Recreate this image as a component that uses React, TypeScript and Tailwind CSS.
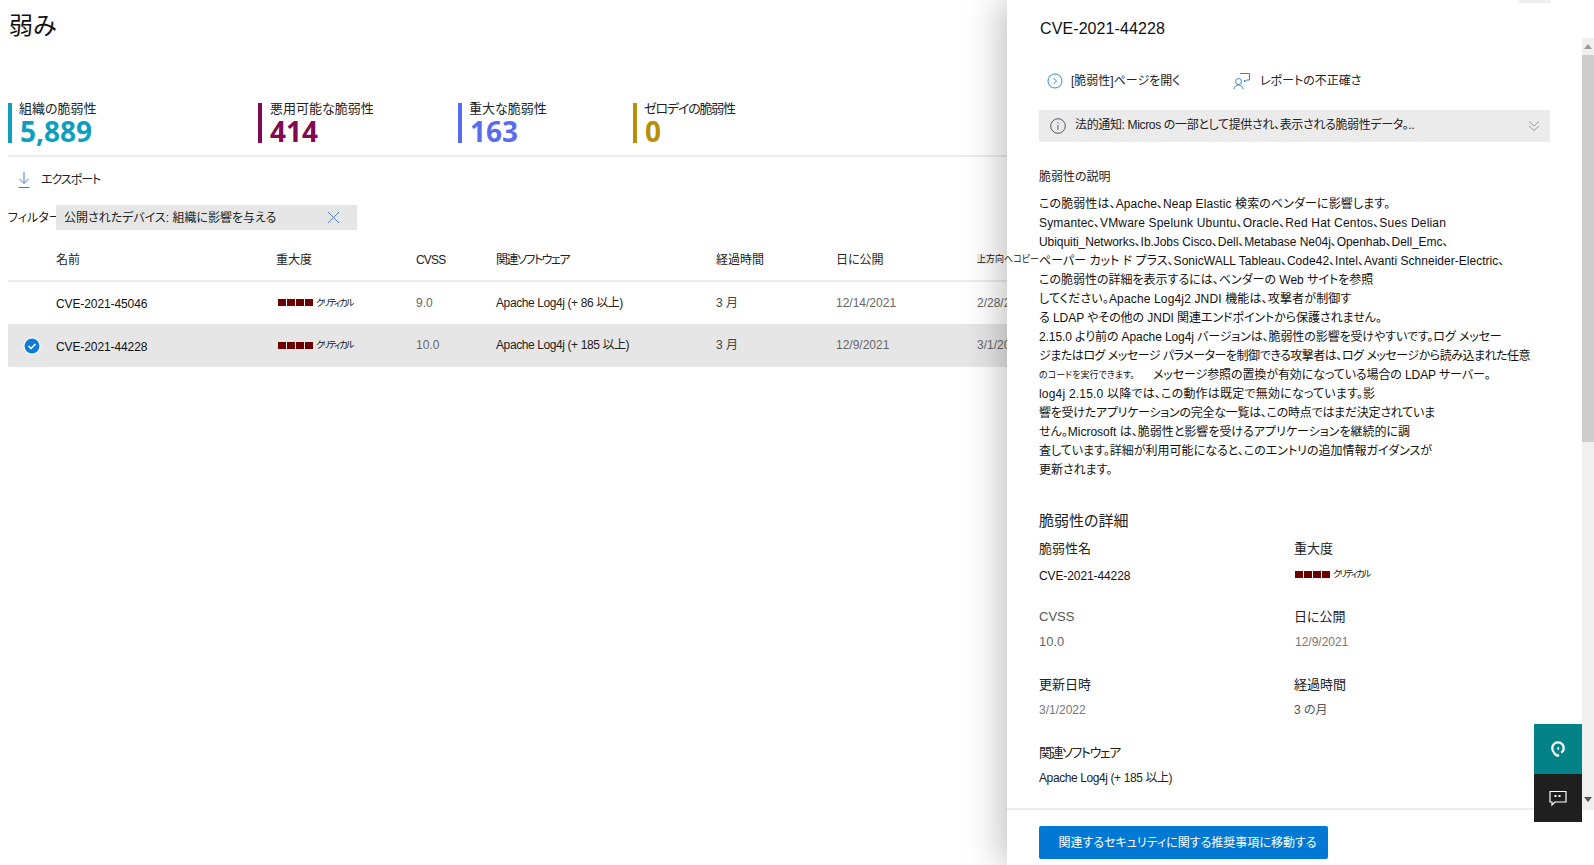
const font = "font-['Liberation_Sans','Noto_Sans_CJK_JP',sans-serif] [font-feature-settings:'palt']";

function Severity({ className }: { className?: string }) {
  return (
    <div className={`flex items-center ${className ?? ""}`}>
      <div className="flex gap-[1px]">
        {[0, 1, 2, 3].map((i) => (
          <span key={i} className="block h-[7px] w-[8px] bg-[#6b0000]" />
        ))}
      </div>
      <span className="ml-[3px] text-[9px] leading-[12px] tracking-[-1.7px] text-[#111]">クリティカル</span>
    </div>
  );
}

const stats = [
  { label: "組織の脆弱性", value: "5,889", w: "w-[250px]", bar: "bg-[#0f9fbd]", text: "text-[#0f9fbd]", track: "-ml-[1px]" },
  { label: "悪用可能な脆弱性", value: "414", w: "w-[200px]", bar: "bg-[#7f0a50]", text: "text-[#7f0a50]", track: "" },
  { label: "重大な脆弱性", value: "163", w: "w-[175px]", bar: "bg-[#5a6cee]", text: "text-[#5a6cee]", track: "-ml-[1px]" },
  { label: "ゼロデイの脆弱性", value: "0", w: "w-[200px]", bar: "bg-[#b88f0a]", text: "text-[#b88f0a]", track: "-ml-[1px] tracking-[-1.2px]" },
];

const cols = "grid grid-cols-[48px_220px_140px_81px_219px_121px_140px_1fr] items-center";

const rows = [
  { id: "CVE-2021-45046", cvss: "9.0", sw: "Apache Log4j (+ 86 以上)", pub: "12/14/2021", upd: "2/28/2022", sel: false, h: "h-[42px]" },
  { id: "CVE-2021-44228", cvss: "10.0", sw: "Apache Log4j (+ 185 以上)", pub: "12/9/2021", upd: "3/1/2022", sel: true, h: "h-[43px]" },
];

const desc = [
  { t: "この脆弱性は、Apache、Neap Elastic 検索のベンダーに影響します。", c: "tracking-[0.1px]" },
  { t: "Symantec、VMware Spelunk Ubuntu、Oracle、Red Hat Centos、Sues Delian", c: "tracking-[0.18px]" },
  { t: "Ubiquiti_Networks、Ib.Jobs Cisco、Dell、Metabase Ne04j、Openhab、Dell_Emc、", c: "tracking-[-0.06px]" },
  { t: "ペーパー カット ド プラス、SonicWALL Tableau、Code42、Intel、Avanti Schneider-Electric、", c: "tracking-[0.02px]" },
  { t: "この脆弱性の詳細を表示するには、ベンダーの Web サイトを参照", c: "" },
  { t: "してください。Apache Log4j2 JNDI 機能は、攻撃者が制御す", c: "tracking-[0.15px]" },
  { t: "る LDAP やその他の JNDI 関連エンドポイントから保護されません。", c: "tracking-[-0.06px]" },
  { t: "2.15.0 より前の Apache Log4j バージョンは、脆弱性の影響を受けやすいです。ログ メッセー", c: "tracking-[-0.1px]" },
  { t: "ジまたはログ メッセージ パラメーターを制御できる攻撃者は、ログ メッセージから読み込まれた任意", c: "tracking-[-0.48px]" },
];

const desc2 = [
  { t: "log4j 2.15.0 以降では、この動作は既定で無効になっています。影", c: "tracking-[0.2px]" },
  { t: "響を受けたアプリケーションの完全な一覧は、この時点ではまだ決定されていま", c: "tracking-[-0.26px]" },
  { t: "せん。Microsoft は、脆弱性と影響を受けるアプリケーションを継続的に調", c: "" },
  { t: "査しています。詳細が利用可能になると、このエントリの追加情報ガイダンスが", c: "" },
  { t: "更新されます。", c: "" },
];

function Detail({ label, children, labelClass, valueClass }: { label: string; children: React.ReactNode; labelClass?: string; valueClass?: string }) {
  return (
    <div>
      <div className={`h-[20px] text-[13px] leading-[20px] ${labelClass ?? "text-[#222]"}`}>{label}</div>
      <div className={`mt-[5px] flex h-[20px] items-center text-[12px] leading-[20px] ${valueClass ?? ""}`}>{children}</div>
    </div>
  );
}

export default function App() {
  return (
    <div className={`relative h-[865px] w-[1594px] overflow-hidden bg-white text-[#111] ${font}`}>
      {/* main page */}
      <div className="pl-[8px]">
        <h1 className="ml-[1px] pt-[14px] text-[24px] leading-[24px] font-normal text-[#111]">弱み</h1>
        <div className="mt-[65px] flex border-b-2 border-[#ececec] pb-[12px]">
          {stats.map((s) => (
            <div key={s.label} className={`flex h-[40px] ${s.w}`}>
              <div className={`h-[40px] w-[4px] ${s.bar}`} />
              <div className="-mt-[2px] pl-[8px]">
                <div className={`h-[16px] text-[13px] leading-[16px] whitespace-nowrap text-[#222] ${s.track}`}>{s.label}</div>
                <div className={`font-['Open_Sans',sans-serif] text-[28px] leading-[28px] font-bold ${s.text}`}>{s.value}</div>
              </div>
            </div>
          ))}
        </div>

        <div className="flex h-[44px] items-center pt-[2px] pl-[9px]">
          <svg width="14" height="18" viewBox="0 0 14 18" fill="none" stroke="#3b7fc9" strokeWidth="1">
            <path d="M7 1v11M2.5 8 7 12.5 11.5 8M1.5 16.5h11" />
          </svg>
          <span className="ml-[10px] text-[12px] tracking-[-1px] text-[#222]">エクスポート</span>
        </div>

        <div className="mt-[4px] flex h-[25px] items-center">
          <span className="w-[48px] text-[12px] whitespace-nowrap text-[#222]">フィルター:</span>
          <div className="flex h-[25px] w-[301px] items-center justify-between bg-[#e6e6e6] pr-[17px] pl-[8px]">
            <span className="text-[12px] text-[#222]">公開されたデバイス: 組織に影響を与える</span>
            <svg width="13" height="13" viewBox="0 0 13 13" fill="none" stroke="#5585c5" strokeWidth="1">
              <path d="M1 1l11 11M12 1 1 12" />
            </svg>
          </div>
        </div>

        <div className={`${cols} mt-[1px] h-[51px] border-b-2 border-[#ececec] pt-[8px] text-[12px] text-[#222]`}>
          <span />
          <span>名前</span>
          <span>重大度</span>
          <span className="tracking-[-0.8px]">CVSS</span>
          <span className="-ml-[1px] tracking-[-1.5px]">関連ソフトウェア</span>
          <span>経過時間</span>
          <span className="-ml-[1px]">日に公開</span>
          <span className="relative z-20 w-max text-[9px] leading-[13px] text-[#111]">
            <span className="bg-[linear-gradient(90deg,#e3e3e3_21px,transparent_21px)]">上方向へコピー</span>
          </span>
        </div>

        {rows.map((r) => (
          <div key={r.id} className={`${cols} ${r.h} pb-[1px] text-[12px] ${r.sel ? "bg-[#e6e6e6]" : "bg-white"}`}>
            <span className="flex justify-center pt-[1px]">
              {r.sel && (
                <svg width="18" height="18" viewBox="0 0 18 18">
                  <circle cx="9" cy="9" r="8.5" fill="#fff" />
                  <circle cx="9" cy="9" r="7.5" fill="#0f7bd8" />
                  <path d="M5.5 9.2 8 11.5l4.5-4.5" fill="none" stroke="#fff" strokeWidth="1.6" />
                </svg>
              )}
            </span>
            <span className="pt-[3px] tracking-[-0.1px] text-[#111]">{r.id}</span>
            <Severity className="ml-[2px]" />
            <span className="text-[#666]">{r.cvss}</span>
            <span className="-ml-[1px] tracking-[-0.4px] text-[#222]">{r.sw}</span>
            <span className="text-[#444]">3 月</span>
            <span className="-ml-[1px] text-[#666]">{r.pub}</span>
            <span className="text-[#666]">{r.upd}</span>
          </div>
        ))}
      </div>

      {/* details panel */}
      <aside className="absolute top-0 right-0 bottom-0 z-10 flex w-[587px] flex-col bg-white shadow-[-4px_0_36px_rgba(0,0,0,0.28)]">
        <div className="absolute top-0 right-[43px] h-[3px] w-[32px] bg-[#eeeeee]" />
        <div className="flex-1 overflow-hidden pr-[44px] pl-[32px]">
          <div className="mt-[19px] ml-[1px] h-[20px] text-[16px] leading-[20px] tracking-[0.1px] text-[#111]">CVE-2021-44228</div>

          <div className="mt-[32px] flex h-[20px] items-center text-[12px] text-[#222]">
            <svg className="ml-[8px]" width="16" height="16" viewBox="0 0 16 16" fill="none" stroke="#2f86d6" strokeWidth="1">
              <circle cx="8" cy="8" r="7" />
              <path d="M6.5 5 9.5 8l-3 3" />
            </svg>
            <span className="ml-[8px] w-[162px]">[脆弱性]ページを開く</span>
            <svg width="18" height="18" viewBox="0 0 18 18" fill="none" stroke="#2f86d6" strokeWidth="1">
              <path d="M7 1.5h9.5v6.5h-3l-2 2v-2" />
              <circle cx="5.5" cy="9.5" r="3" />
              <path d="M1 17c.4-2.6 2.2-4 4.5-4s4.1 1.4 4.5 4" />
            </svg>
            <span className="ml-[9px]">レポートの不正確さ</span>
          </div>

          <div className="mt-[19px] flex h-[32px] items-center bg-[#ebebeb] pr-[10px] pl-[11px]">
            <svg width="16" height="16" viewBox="0 0 16 16" fill="none" stroke="#5b5560" strokeWidth="1">
              <circle cx="8" cy="8" r="7.3" />
              <path d="M8 7v5M8 4.2v1.2" />
            </svg>
            <span className="ml-[9px] flex-1 pb-[3px] text-[12px] tracking-[-0.35px] text-[#222]">法的通知: Micros の一部として提供され、表示される脆弱性データ。..</span>
            <svg width="12" height="12" viewBox="0 0 12 12" fill="none" stroke="#9a9a9a" strokeWidth="1">
              <path d="M1 1.5 6 6l5-4.5M1 6l5 4.5L11 6" />
            </svg>
          </div>

          <div className="mt-[25px] h-[20px] text-[12px] leading-[20px] text-[#222]">脆弱性の説明</div>

          <div className="mt-[8px] text-[12px] leading-[19px] whitespace-nowrap text-[#111]">
            {desc.map((l) => (
              <div key={l.t} className={`h-[19px] ${l.c}`}>{l.t}</div>
            ))}
            <div className="flex h-[19px] items-center">
              <span className="w-[114px] text-[9px]">のコードを実行できます。</span>
              <span className="tracking-[-0.1px]">メッセージ参照の置換が有効になっている場合の LDAP サーバー。</span>
            </div>
            {desc2.map((l) => (
              <div key={l.t} className={`h-[19px] ${l.c}`}>{l.t}</div>
            ))}
          </div>

          <div className="mt-[30px] h-[22px] text-[15px] leading-[22px] text-[#222]">脆弱性の詳細</div>

          <div className="mt-[7px] grid grid-cols-[255px_1fr] gap-y-[23px]">
            <Detail label="脆弱性名" valueClass="pt-[3px]"><span className="tracking-[-0.1px] text-[#111]">CVE-2021-44228</span></Detail>
            <Detail label="重大度"><Severity className="ml-[1px]" /></Detail>
            <Detail label="CVSS" labelClass="text-[#555]"><span className="text-[13px] text-[#666]">10.0</span></Detail>
            <Detail label="日に公開"><span className="ml-[1px] text-[#777]">12/9/2021</span></Detail>
            <Detail label="更新日時"><span className="text-[#777]">3/1/2022</span></Detail>
            <Detail label="経過時間"><span className="text-[#555]">3 の月</span></Detail>
            <Detail label="関連ソフトウェア" labelClass="text-[#222] tracking-[-1.4px]"><span className="tracking-[-0.4px] text-[#222]">Apache Log4j (+ 185 以上)</span></Detail>
          </div>
        </div>

        <div className="h-[57px] shrink-0 border-t-2 border-[#ececec] pt-[16px] pl-[32px]">
          <button className="h-[33px] w-[289px] rounded-[2px] bg-[#0078d4] pl-[8px] text-[12px] text-white">
            関連するセキュリティに関する推奨事項に移動する
          </button>
        </div>

        {/* scrollbar */}
        <div className="absolute top-[38px] right-0 h-[772px] w-[12px] bg-[#f0f0f0]">
          <div className="mx-auto mt-[6px] h-0 w-0 border-x-[4px] border-b-[5px] border-x-transparent border-b-[#9a9a9a]" />
          <div className="mt-[6px] h-[387px] w-[12px] bg-[#cdcdcd]" />
          <div className="absolute bottom-[8px] left-[2px] h-0 w-0 border-x-[4px] border-t-[5px] border-x-transparent border-t-[#555]" />
        </div>

        {/* floating buttons */}
        <div className="absolute top-[724px] right-[12px] w-[48px]">
          <div className="flex h-[50px] items-center justify-center bg-[#038387]">
            <svg width="14" height="16" viewBox="0 0 14 16" fill="none" stroke="#fff" strokeWidth="2.2">
              <path d="M3 11.5C1.8 10.5 1.3 9 1.3 7.3 1.3 4 3.8 1.3 7 1.3s5.7 2.7 5.7 6c0 2-1 3.5-2.5 4.2" />
              <path d="M3 11.5c.8 1.9 2.3 3.2 5.2 3.2" />
              <path d="M7.3 6v3" strokeWidth="1.6" />
            </svg>
          </div>
          <div className="flex h-[48px] items-center justify-center bg-[#1f1f1f]">
            <svg width="18" height="17" viewBox="0 0 18 17" fill="none" stroke="#fff" strokeWidth="1.2">
              <path d="M1 1.5h16v10.5H6L3 15v-3H1z" />
              <path d="M6.5 5v2M10.5 5v2" strokeWidth="2" />
            </svg>
          </div>
        </div>
      </aside>
    </div>
  );
}
